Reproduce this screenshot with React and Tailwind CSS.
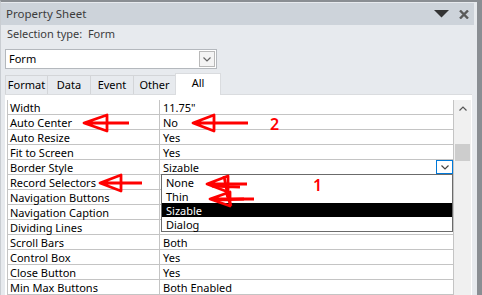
const rows = [
  ['Width', '11.75"'],
  ['Auto Center', 'No'],
  ['Auto Resize', 'Yes'],
  ['Fit to Screen', 'Yes'],
  ['Border Style', 'Sizable', true],
  ['Record Selectors', ''],
  ['Navigation Buttons', ''],
  ['Navigation Caption', ''],
  ['Dividing Lines', ''],
  ['Scroll Bars', 'Both'],
  ['Control Box', 'Yes'],
  ['Close Button', 'Yes'],
  ['Min Max Buttons', 'Both Enabled'],
]

const tabs = [
  ['Format', 'w-[42px]'],
  ['Data', 'w-[43px]'],
  ['Event', 'w-[43px]'],
  ['Other', 'w-[42px]'],
]

const Chevron = ({ up = false, color = '#555' }) => (
  <svg width="8" height="5" viewBox="0 0 8 5">
    <polyline
      points={up ? '0.5,4.5 4,1 7.5,4.5' : '0.5,0.5 4,4 7.5,0.5'}
      fill="none"
      stroke={color}
      strokeWidth="1.2"
    />
  </svg>
)

const arrow = (x, y, bx, h, sx) =>
  `M${sx} ${y} L${x} ${y} M${x} ${y} L${bx} ${y - h} L${bx} ${y + h} Z`

const Annotations = () => (
  <>
    <svg
      className="absolute top-[-2px] left-[-1px] pointer-events-none"
      width="482"
      height="295"
      viewBox="0 0 482 295"
    >
      <g fill="none" stroke="#ff0000" strokeWidth="2.8" strokeLinejoin="round">
        <path d={arrow(84, 123, 107, 8, 129)} />
        <path d={arrow(193, 123, 214, 8, 248)} />
        <path d={arrow(100, 183, 121, 8, 142)} />
        <path d={arrow(207, 184, 228, 8, 247)} />
        <path d="M224 176 L228 197 M212 186 L240 187" />
        <path d={arrow(210, 199, 230, 7, 254)} />
        <path d="M226 192 L231 206 M214 200 L244 199" />
      </g>
    </svg>
    <span className="absolute left-[269px] top-[113px] text-[16px] leading-[18px] font-semibold text-[#ff0000]">
      2
    </span>
    <span className="absolute left-[312px] top-[174px] text-[16px] leading-[18px] font-semibold text-[#ff0000]">
      1
    </span>
  </>
)

export default function App() {
  return (
    <div className="relative w-[482px] h-[295px] overflow-hidden flex flex-col bg-[#e7eaee] border-t-2 border-t-[#8a8e93] border-r-[5px] border-r-[#8a8e93] border-l border-l-[#c9cdd2] pt-px font-['Noto_Sans',sans-serif] text-[11px] text-black">
      <div className="mr-[3px] h-[22px] shrink-0 bg-[#cdd3da] flex items-center pl-[5px] text-[#3c3c3c]">
        <span className="flex-1 leading-[14px] text-[11.5px]">Property Sheet</span>
        <svg width="15" height="8" viewBox="0 0 15 8" className="mr-[10px]">
          <polygon points="0,0 15,0 7.5,7.5" fill="#333" />
        </svg>
        <svg width="10" height="9" viewBox="0 0 10 9" className="mr-[5px]">
          <path d="M1 0.5 L9 8.5 M9 0.5 L1 8.5" stroke="#5a5a5a" strokeWidth="2.4" />
        </svg>
      </div>

      <div className="h-[18px] shrink-0 flex items-center pl-[6px] text-[#3c3c3c] leading-[14px]">
        Selection type:&nbsp;&nbsp;Form
      </div>

      <div className="ml-[4px] mt-[6px] w-[212px] h-[20px] shrink-0 flex items-center justify-between bg-white border border-[#b4b8bd] pl-[3px] pr-px">
        <span className="leading-[14px]">Form</span>
        <div className="w-[16px] h-[16px] flex items-center justify-center border border-[#b9b9b9] bg-[#f4f4f4]">
          <Chevron color="#666" />
        </div>
      </div>

      <div className="ml-[4px] mt-[4px] h-[21px] shrink-0 flex items-end">
        {tabs.map(([t, w]) => (
          <div
            key={t}
            className={`${w} h-[19px] flex items-center justify-center border-l border-t border-[#d3d5d8] leading-[14px]`}
          >
            {t}
          </div>
        ))}
        <div className="w-[46px] h-[22px] -mb-px relative z-10 flex items-center justify-center bg-white border-x border-t border-[#dadcdf] leading-[14px] pb-[3px]">
          All
        </div>
      </div>

      <div className="ml-[4px] w-[467px] flex-1 bg-white border-t border-[#dadcdf] pt-[5px] pl-[2px] flex items-start">
        <div className="w-[447px] border-x border-[#c4c4c4]">
          {rows.map(([name, value, drop]) => (
            <div key={name} className="h-[15px] flex border-b border-[#c4c4c4] leading-[16px]">
              <div className="w-[152px] h-[14px] border-r border-[#c4c4c4] pl-[2px] whitespace-nowrap">{name}</div>
              <div className="flex-1 h-[14px] flex pl-[3px] whitespace-nowrap">
                <span className="flex-1">{value}</span>
                {drop && (
                  <div className="w-[17px] h-[14px] flex items-center justify-center border border-[#0078d7] bg-white">
                    <Chevron color="#444" />
                  </div>
                )}
              </div>
            </div>
          ))}
        </div>
        <div className="w-[17px] h-[200px] bg-[#f0f0f0] flex flex-col items-center">
          <div className="h-[17px] flex items-center justify-center">
            <Chevron up color="#555" />
          </div>
          <div className="mt-[27px] w-[15px] h-[17px] bg-[#cdcdcd]" />
        </div>
      </div>

      <div className="absolute left-[160px] top-[172px] w-[292px] h-[58px] bg-white border border-[#6b6b6b] flex flex-col leading-[15px]">
        <div className="h-[14px] pl-[4px]">None</div>
        <div className="h-[14px] pl-[4px]">Thin</div>
        <div className="h-[14px] pl-[4px] bg-black text-white">Sizable</div>
        <div className="h-[14px] pl-[4px]">Dialog</div>
      </div>

      <Annotations />
    </div>
  )
}
